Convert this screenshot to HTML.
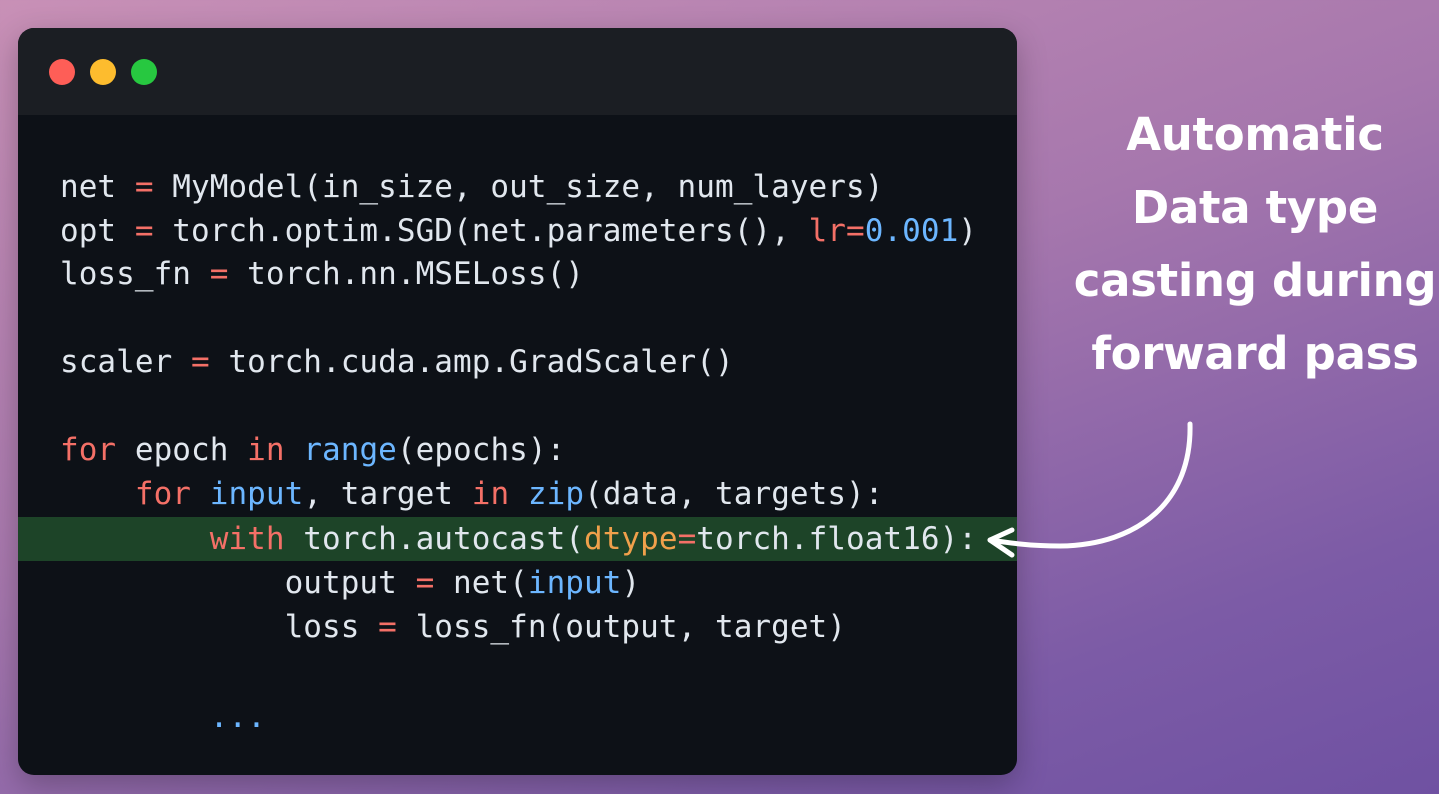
<!DOCTYPE html>
<html><head><style>
html,body{margin:0;padding:0}
body{width:1439px;height:794px;overflow:hidden;position:relative;
background:linear-gradient(160deg,#c890b6 0%,#a677ad 45%,#7c5ba6 80%,#6f51a2 100%);
font-family:"Liberation Sans",sans-serif}
.win{position:absolute;left:18px;top:28px;width:999px;height:747px;background:#0d1117;border-radius:16px;overflow:hidden;box-shadow:0 10px 30px rgba(0,0,0,.25)}
.bar{height:87px;background:#1b1e23;position:relative}
.dot{position:absolute;top:31px;width:26px;height:26px;border-radius:50%}
.code{position:absolute;left:0;top:0;width:999px;font-family:"DejaVu Sans Mono","Liberation Mono",monospace;font-size:31px;color:#e1e7ee;letter-spacing:0.05px}
.l{position:absolute;left:42px;white-space:pre;height:44px;line-height:44px}
.k{color:#f47067}.b{color:#6cb6ff}.o{color:#f0a04b}
.hl{position:absolute;left:0;width:999px;top:489px;height:44px;background:#1d4428}
.txt{position:absolute;left:1045px;width:420px;text-align:center;color:#fff;font-family:"DejaVu Sans",sans-serif;font-weight:bold;font-size:45px;line-height:73px;top:98px;letter-spacing:-0.3px}
</style></head><body>
<div class="win">
<div class="bar">
<div class="dot" style="left:31px;background:#fe5e57"></div>
<div class="dot" style="left:72px;background:#fdbc2e"></div>
<div class="dot" style="left:113px;background:#27c840"></div>
</div>
<div class="hl"></div>
<div class="code">
<div class="l" style="top:137px">net <span class="k">=</span> MyModel(in_size, out_size, num_layers)</div>
<div class="l" style="top:181px">opt <span class="k">=</span> torch.optim.SGD(net.parameters(), <span class="k">lr</span><span class="k">=</span><span class="b">0.001</span>)</div>
<div class="l" style="top:224px">loss_fn <span class="k">=</span> torch.nn.MSELoss()</div>
<div class="l" style="top:312px">scaler <span class="k">=</span> torch.cuda.amp.GradScaler()</div>
<div class="l" style="top:400px"><span class="k">for</span> epoch <span class="k">in</span> <span class="b">range</span>(epochs):</div>
<div class="l" style="top:444px">    <span class="k">for</span> <span class="b">input</span>, target <span class="k">in</span> <span class="b">zip</span>(data, targets):</div>
<div class="l" style="top:489px">        <span class="k">with</span> torch.autocast(<span class="o">dtype</span><span class="k">=</span>torch.float16):</div>
<div class="l" style="top:533px">            output <span class="k">=</span> net(<span class="b">input</span>)</div>
<div class="l" style="top:577px">            loss <span class="k">=</span> loss_fn(output, target)</div>
<div class="l" style="top:667px">        <span class="b">...</span></div>
</div>
</div>
<div class="txt">Automatic<br>Data type<br>casting during<br>forward pass</div>
<svg style="position:absolute;left:0;top:0" width="1439" height="794">
<path d="M1190 424 C1192 500 1140 545 1060 546 C1030 546 1010 543 990 540" fill="none" stroke="#fff" stroke-width="5" stroke-linecap="round"/>
<path d="M1012 530 L990 540 L1012 555" fill="none" stroke="#fff" stroke-width="5" stroke-linecap="round" stroke-linejoin="round"/>
</svg>
</body></html>
